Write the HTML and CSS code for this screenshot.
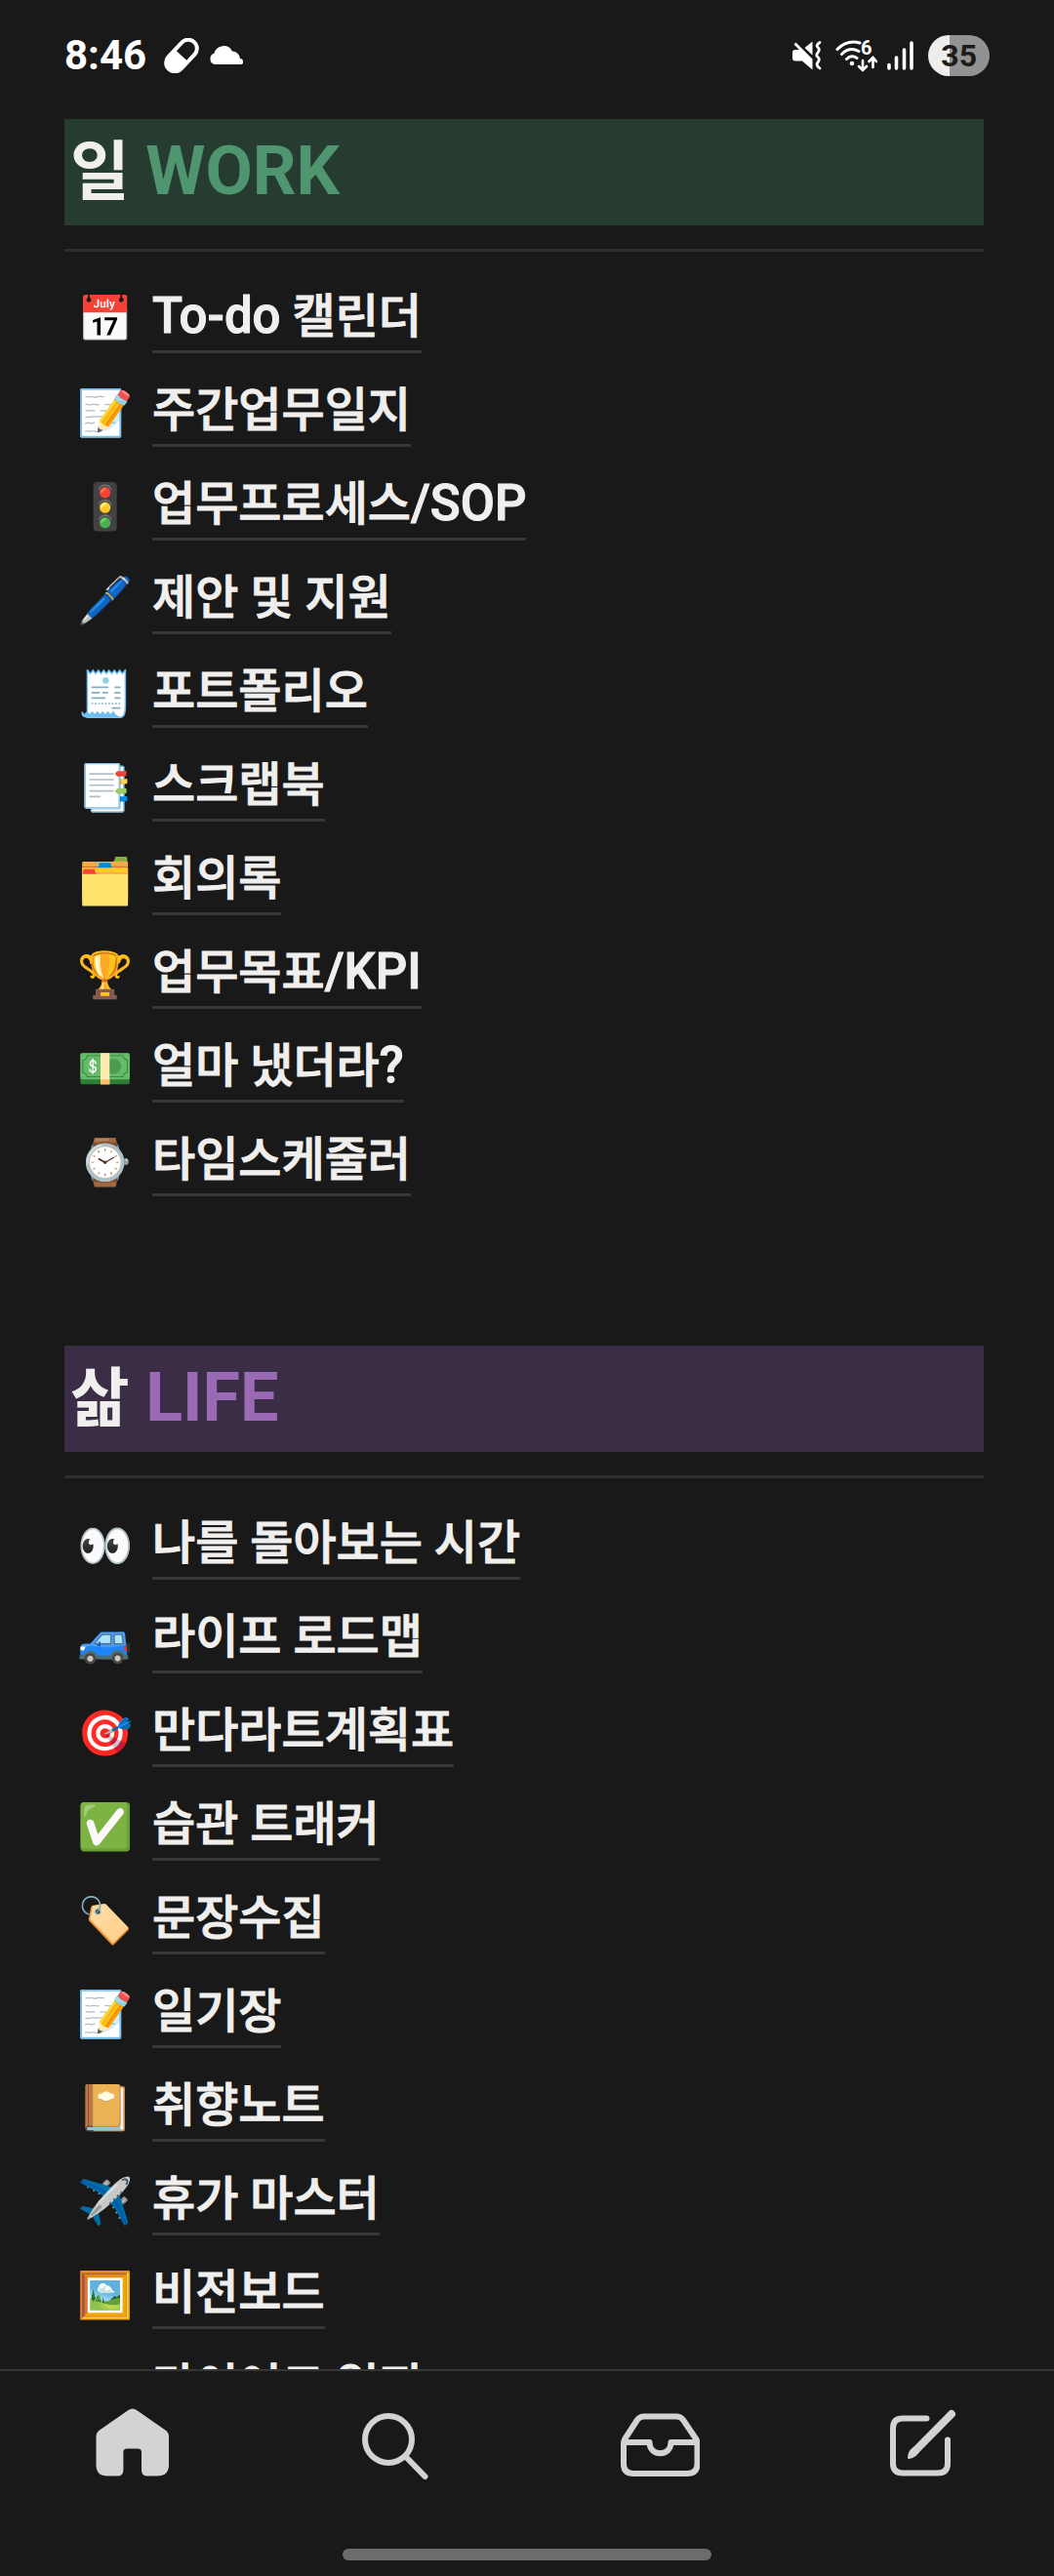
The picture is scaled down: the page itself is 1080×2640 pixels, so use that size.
FILE: index.html
```html
<!DOCTYPE html>
<html lang="ko">
<head>
<meta charset="utf-8">
<meta name="viewport" content="width=device-width, initial-scale=1">
<title>일과 삶</title>
<link rel="stylesheet" href="styles.css">
</head>
<body>
<header class="status">
  <div class="status-left">
    <span class="clock">8:46</span>
    <span class="notices">
      <svg width="36" height="36" viewBox="0 0 36 36" aria-hidden="true"><g transform="translate(18 18) rotate(-47)"><rect x="-21" y="-11" width="42" height="22" rx="11" fill="#fff"/><path d="M0-7H10a7 7 0 0 1 0 14H0z" fill="#191919"/></g></svg>
      <svg width="37" height="36" viewBox="0 0 37 36" aria-hidden="true"><path fill="#fff" d="M6 27a6 6 0 0 1-.5-11.500A10 10 0 0 1 24 13.500a8 8 0 0 1 8 7.500 3.200 3.200 0 0 1 1.500 6z"/></svg>
    </span>
  </div>
  <div class="status-right">
    <svg width="34" height="30" viewBox="0 0 34 30" aria-hidden="true"><path fill="#fff" d="M3 9H7L1.500 3.500 3.500 1.500 20.500 18.500V29.500L10 20.500H3Q0 20.500 0 17.500V12Q0 9 3 9zM12.500 7L20.500 .5V14.500z"/><path d="M28 1.500Q23.500 4.500 26 6.500T26 12Q23.500 14.500 26 16.500T26 22Q23.500 24.500 28 28" fill="none" stroke="#fff" stroke-width="2.800" stroke-linecap="round"/></svg>
    <svg width="43" height="33" viewBox="0 0 43 33" aria-hidden="true"><g fill="none" stroke="#fff" stroke-width="3" stroke-linecap="round"><path d="M2 9.500Q12-.5 25 3"/><path d="M6.500 14.500Q14.500 6.500 24 11.500"/><path d="M11.500 19.500Q16.500 14.500 22 18.500"/><path stroke-width="2.600" d="M28 21V30M24 27L28 31 32 27M38.500 28V19M34.500 22L38.500 18 42 22"/></g><circle cx="17" cy="24" r="2.300" fill="#fff"/><text class="wifi-gen" x="26" y="15">6</text></svg>
    <svg width="32" height="30" viewBox="0 0 32 30" aria-hidden="true"><path d="M2 24.500V28M9.500 17V28M17.500 9V28M25 2V28" stroke="#fff" stroke-width="3.600" stroke-linecap="round"/></svg>
    <span class="battery">35</span>
  </div>
</header>

<main class="page">
  <section class="group">
    <h2 class="title title-work">일 <span class="latin">WORK</span></h2>
    <hr class="rule">
    <ul class="links">
      <li><span class="emoji">📅</span><a href="#"><span class="latin">To-do</span> 캘린더</a></li>
      <li><span class="emoji">📝</span><a href="#">주간업무일지</a></li>
      <li><span class="emoji">🚦</span><a href="#">업무프로세스<span class="latin">/SOP</span></a></li>
      <li><span class="emoji">🖊️</span><a href="#">제안 및 지원</a></li>
      <li><span class="emoji">🧾</span><a href="#">포트폴리오</a></li>
      <li><span class="emoji">📑</span><a href="#">스크랩북</a></li>
      <li><span class="emoji">🗂️</span><a href="#">회의록</a></li>
      <li><span class="emoji">🏆</span><a href="#">업무목표<span class="latin">/KPI</span></a></li>
      <li><span class="emoji">💵</span><a href="#">얼마 냈더라<span class="latin">?</span></a></li>
      <li><span class="emoji">⌚</span><a href="#">타임스케줄러</a></li>
    </ul>
  </section>

  <section class="group">
    <h2 class="title title-life">삶 <span class="latin">LIFE</span></h2>
    <hr class="rule">
    <ul class="links">
      <li><span class="emoji">👀</span><a href="#">나를 돌아보는 시간</a></li>
      <li><span class="emoji">🚙</span><a href="#">라이프 로드맵</a></li>
      <li><span class="emoji">🎯</span><a href="#">만다라트계획표</a></li>
      <li><span class="emoji">✅</span><a href="#">습관 트래커</a></li>
      <li><span class="emoji">🏷️</span><a href="#">문장수집</a></li>
      <li><span class="emoji">📝</span><a href="#">일기장</a></li>
      <li><span class="emoji">📔</span><a href="#">취향노트</a></li>
      <li><span class="emoji">✈️</span><a href="#">휴가 마스터</a></li>
      <li><span class="emoji">🖼️</span><a href="#">비전보드</a></li>
      <li><span class="emoji">🥗</span><a href="#">다이어트 일지</a></li>
    </ul>
  </section>
</main>

<footer class="dock">
  <nav class="tabs">
    <button type="button" aria-label="홈"><svg width="84" height="84" viewBox="0 0 84 84"><path fill="currentColor" d="M38.500 9Q42.700 6 47 9L76.500 29.500Q80 32 80 36V65Q80 76.500 68 76.500H58Q52 76.500 52 70.500V52Q52 48.500 48.500 48.500H37Q33.400 48.500 33.400 52V70.500Q33.400 76.500 27.400 76.500H17Q5.500 76.500 5.500 65V36Q5.500 32 9 29.500Z"/></svg></button>
    <button type="button" aria-label="검색"><svg class="line" width="84" height="84" viewBox="0 0 84 84"><circle cx="35" cy="39" r="24"/><path d="M54 58L72.500 77"/></svg></button>
    <button type="button" aria-label="수신함"><svg class="line" width="84" height="84" viewBox="0 0 84 84"><path d="M6 43Q6 41 7 39L20 19Q22.500 15.500 27 15.500H60Q64.500 15.500 67 19L80.500 39Q81.500 41 81.500 43V64Q81.500 74 71.500 74H16Q6 74 6 64Z"/><path d="M7 42H32.500C32.500 57 54.500 57 54.500 42H81"/></svg></button>
    <button type="button" aria-label="새 페이지"><svg class="line" width="84" height="84" viewBox="0 0 84 84"><path d="M46.500 17.500H22Q12 17.500 12 27.500V63.500Q12 73.500 22 73.500H58Q68 73.500 68 63.500V39.500"/><path d="M36 49.500L72 13" stroke-width="8"/><path fill="currentColor" stroke="none" d="M27 57.500Q27 53 29.500 50L33.200 46.500 39 52.300 35.500 56Q32 58.500 28.500 59Q26.800 59 27 57.500Z"/></svg></button>
  </nav>
  <div class="handle"></div>
</footer>
</body>
</html>
```
FILE: styles.css
```css
* {
  box-sizing: border-box;
}

body {
  margin: 0;
  height: 100vh;
  display: flex;
  flex-direction: column;
  background: #191919;
  color: #f0efed;
  font-family: Roboto, "Noto Sans CJK KR", sans-serif;
}

/* status bar */
.status {
  flex: none;
  display: flex;
  justify-content: space-between;
  align-items: center;
  padding: 36px 66px 44px;
  color: #fff;
}

.status-left,
.status-right,
.notices {
  display: flex;
  align-items: center;
}

.status-left {
  gap: 18px;
}

.status-right,
.notices {
  gap: 10px;
}

.clock {
  font-size: 42px;
  line-height: 42px;
  font-weight: 700;
}

.wifi-gen {
  font-size: 20px;
  font-weight: 700;
  fill: #fff;
}

.battery {
  padding: 0 13px;
  border-radius: 21px;
  background: linear-gradient(to right, #ededed 35%, #929292 35%);
  color: #1b1b1b;
  font-size: 32px;
  line-height: 42px;
  font-weight: 700;
}

/* page content */
.page {
  flex: 1;
  min-height: 0;
  padding: 0 72px 0 66px;
  overflow-y: auto;
  scrollbar-width: none;
}

.group {
  margin-bottom: 153px;
}

.title {
  margin: 0;
  padding: 0 6px;
  font-size: 66px;
  line-height: 109px;
  font-weight: 700;
}

.title .latin {
  font-size: 70px;
  line-height: 1;
}

.title-work {
  background: #263c30;
}

.title-work .latin {
  color: #4f9670;
}

.title-life {
  background: #3c2d46;
}

.title-life .latin {
  color: #9b6ab5;
}

.rule {
  height: 3px;
  margin: 24px 0 0;
  border: 0;
  background: #2f2f2f;
}

.links {
  display: grid;
  gap: 25px;
  margin: 0;
  padding: 33px 0 0;
  list-style: none;
}

.links li {
  display: grid;
  grid-template-columns: 84px auto;
  justify-content: start;
  gap: 6px;
}

.emoji {
  padding-top: 2px;
  font-family: "Noto Color Emoji", sans-serif;
  font-size: 46px;
  line-height: 69px;
  text-align: center;
}

.links a {
  border-bottom: 3px solid #373737;
  color: inherit;
  font-size: 48px;
  line-height: 68px;
  font-weight: 500;
  text-decoration: none;
  -webkit-text-stroke: 1px currentColor;
}

.links .latin {
  font-size: 51px;
  line-height: 1;
}

/* bottom navigation */
.dock {
  flex: none;
  padding-bottom: 16px;
  border-top: 2px solid #373737;
}

.tabs {
  display: grid;
  grid-template-columns: repeat(4, 1fr);
  justify-items: center;
  padding: 31px 0 67px;
}

.tabs button {
  padding: 0;
  border: 0;
  background: none;
  color: #d3d3d3;
}

.tabs svg {
  display: block;
}

.line {
  fill: none;
  stroke: currentColor;
  stroke-width: 6;
  stroke-linecap: round;
  stroke-linejoin: round;
}

.handle {
  width: 35%;
  height: 12px;
  margin: 0 auto;
  border-radius: 6px;
  background: #6c6c6c;
}
```
